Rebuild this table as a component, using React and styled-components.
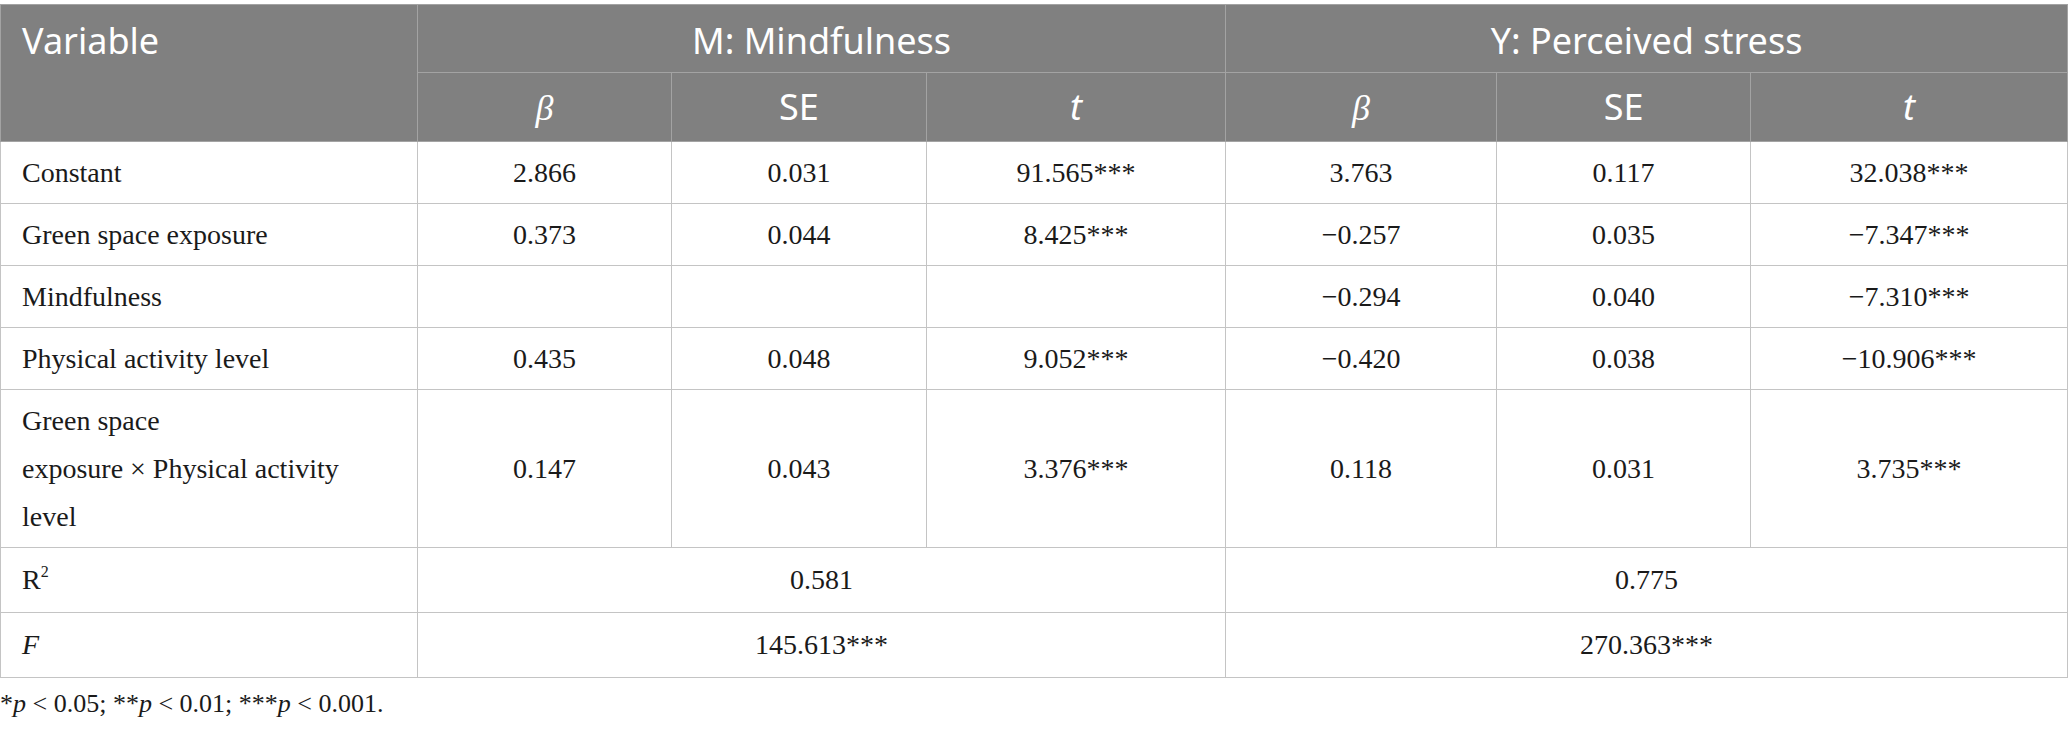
import React from "react";
import styled, { createGlobalStyle } from "styled-components";

const Global = createGlobalStyle`
  html, body { margin: 0; padding: 0; background: #ffffff; }
  body { font-family: "Liberation Serif", "Times New Roman", serif; color: #1a1a1a; }
`;

const Page = styled.div`
  padding-top: 4px;
  width: 2068px;
`;

const Table = styled.table`
  border-collapse: collapse;
  table-layout: fixed;
  width: 2067px;
  border: 1px solid #bdbdbd;
`;

const HeadCell = styled.th`
  background: #808080;
  color: #ffffff;
  font-family: "Noto Sans", "Open Sans", sans-serif;
  font-weight: 400;
  font-size: 36px;
  line-height: 50px;
  padding: ${(p) => (p.$sub ? "9px 21px 8px" : "11px 21px 6px")};
  text-align: ${(p) => (p.$left ? "left" : "center")};
  vertical-align: top;
  border: 1px solid #a3a3a3;
`;

const Greek = styled.span`
  font-family: "Liberation Serif", "Times New Roman", serif;
  font-style: italic;
  font-size: 36px;
`;

const SansItalic = styled.span`
  font-style: italic;
`;

const Cell = styled.td`
  font-family: "Liberation Serif", "Times New Roman", serif;
  font-size: 28px;
  line-height: 48px;
  padding: ${(p) => (p.$stat ? "8px 21px 8px" : "7px 21px 6px")};
  text-align: ${(p) => (p.$left ? "left" : "center")};
  vertical-align: middle;
  border: 1px solid #c4c4c4;
  color: #1a1a1a;
`;

const Ital = styled.i`
  font-style: italic;
`;

const Sup = styled.sup`
  font-size: 16px;
  line-height: 0;
  vertical-align: 12px;
`;

const Note = styled.p`
  margin: 11px 0 0;
  font-family: "Liberation Serif", "Times New Roman", serif;
  font-size: 26px;
  line-height: 30px;
  color: #1a1a1a;
`;

const widths = [417, 254, 255, 299, 271, 254, 317];

const rows = [
  { label: "Constant", v: ["2.866", "0.031", "91.565***", "3.763", "0.117", "32.038***"] },
  { label: "Green space exposure", v: ["0.373", "0.044", "8.425***", "\u22120.257", "0.035", "\u22127.347***"] },
  { label: "Mindfulness", v: ["", "", "", "\u22120.294", "0.040", "\u22127.310***"] },
  { label: "Physical activity level", v: ["0.435", "0.048", "9.052***", "\u22120.420", "0.038", "\u221210.906***"] },
  {
    label: (
      <>
        Green space
        <br />
        exposure × Physical activity
        <br />
        level
      </>
    ),
    v: ["0.147", "0.043", "3.376***", "0.118", "0.031", "3.735***"],
  },
];

export default function App() {
  return (
    <Page>
      <Global />
      <Table>
        <colgroup>
          {widths.map((w, i) => (
            <col key={i} style={{ width: w }} />
          ))}
        </colgroup>
        <thead>
          <tr>
            <HeadCell $left rowSpan={2}>Variable</HeadCell>
            <HeadCell colSpan={3}>M: Mindfulness</HeadCell>
            <HeadCell colSpan={3}>Y: Perceived stress</HeadCell>
          </tr>
          <tr>
            <HeadCell $sub><Greek>β</Greek></HeadCell>
            <HeadCell $sub>SE</HeadCell>
            <HeadCell $sub><SansItalic>t</SansItalic></HeadCell>
            <HeadCell $sub><Greek>β</Greek></HeadCell>
            <HeadCell $sub>SE</HeadCell>
            <HeadCell $sub><SansItalic>t</SansItalic></HeadCell>
          </tr>
        </thead>
        <tbody>
          {rows.map((r, i) => (
            <tr key={i}>
              <Cell $left>{r.label}</Cell>
              {r.v.map((x, j) => (
                <Cell key={j}>{x}</Cell>
              ))}
            </tr>
          ))}
          <tr>
            <Cell $left $stat>R<Sup>2</Sup></Cell>
            <Cell $stat colSpan={3}>0.581</Cell>
            <Cell $stat colSpan={3}>0.775</Cell>
          </tr>
          <tr>
            <Cell $left $stat><Ital>F</Ital></Cell>
            <Cell $stat colSpan={3}>145.613***</Cell>
            <Cell $stat colSpan={3}>270.363***</Cell>
          </tr>
        </tbody>
      </Table>
      <Note>
        *<Ital>p</Ital> &lt; 0.05; **<Ital>p</Ital> &lt; 0.01; ***<Ital>p</Ital> &lt; 0.001.
      </Note>
    </Page>
  );
}
